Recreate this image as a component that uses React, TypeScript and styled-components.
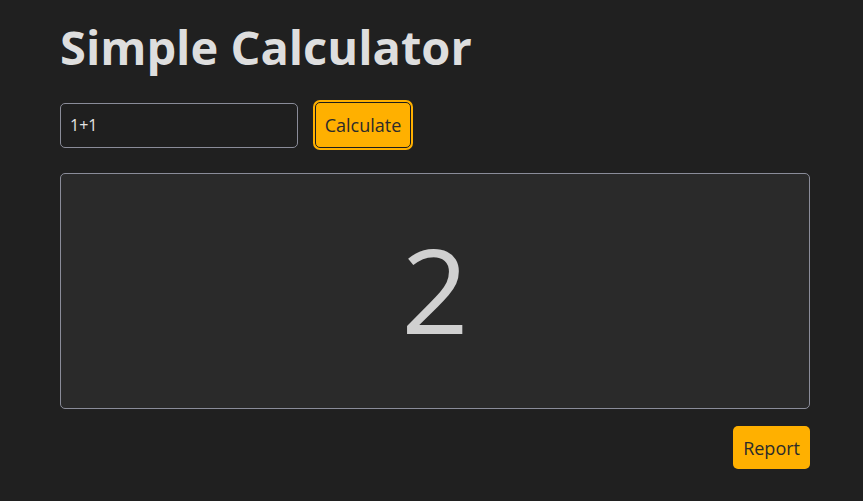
import React from "react";
import styled, { createGlobalStyle } from "styled-components";

const Global = createGlobalStyle`
  html, body { margin: 0; padding: 0; background: #202020; }
  body { font-family: "Open Sans", "Noto Sans", sans-serif; color: #dcdcdc; }
`;

const Page = styled.div`
  width: 750px;
  padding: 14px 0 0 60px;
  display: flex;
  flex-direction: column;
`;

const Title = styled.h1`
  margin: 0;
  font-size: 47px;
  font-weight: 700;
  line-height: 66px;
  color: #dedede;
`;

const Row = styled.div`
  display: flex;
  align-items: center;
  gap: 17px;
  margin-top: 22px;
`;

const Input = styled.input`
  box-sizing: border-box;
  width: 238px;
  height: 45px;
  background: #1f1f1f;
  border: 1px solid #8a8c99;
  border-radius: 5px;
  color: #e4e4e4;
  font-family: inherit;
  font-size: 16px;
  padding: 0 9px;
  outline: none;
`;

const Button = styled.button<{ $h?: number }>`
  box-sizing: border-box;
  height: ${(p) => p.$h ?? 44}px;
  padding: 0 9px;
  background: #ffb000;
  color: #2b2b2b;
  font-family: inherit;
  font-size: 18px;
  border: 1px solid transparent;
  border-radius: 5px;
  cursor: pointer;
`;

const FocusButton = styled(Button)`
  width: 96px;
  padding: 0;
  border-color: #1c1c1c;
  box-shadow: 0 0 0 2px #ffb000;
`;

const Result = styled.div`
  box-sizing: border-box;
  margin-top: 25px;
  height: 236px;
  background: #2a2a2a;
  border: 1px solid #8a8c99;
  border-radius: 5px;
  display: flex;
  align-items: center;
  justify-content: center;
  font-size: 118px;
  color: #d0d0d0;
  line-height: 1;
  padding-bottom: 4px;
`;

const Footer = styled.div`
  display: flex;
  justify-content: flex-end;
  margin-top: 17px;
`;

export default function App() {
  return (
    <>
      <Global />
      <Page>
        <Title>Simple Calculator</Title>
        <Row>
          <Input defaultValue="1+1" />
          <FocusButton $h={46}>Calculate</FocusButton>
        </Row>
        <Result>2</Result>
        <Footer>
          <Button $h={43}>Report</Button>
        </Footer>
      </Page>
    </>
  );
}
